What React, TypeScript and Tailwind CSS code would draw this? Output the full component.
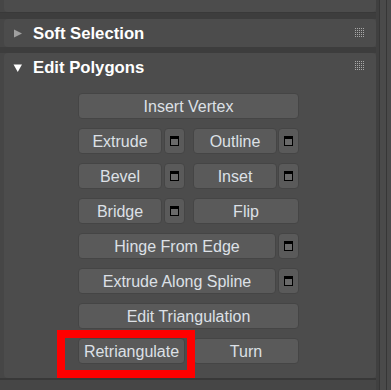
import React from "react";

const font = { fontFamily: '"Liberation Sans", Arial, sans-serif' };

function Grip() {
  const dots = [];
  for (let r = 0; r < 5; r++)
    for (let c = 0; c < 5; c++)
      dots.push(<rect key={`${r}-${c}`} x={c * 2} y={r * 2} width={1} height={1} fill="#a8a8a8" />);
  return (
    <svg width="10" height="10" viewBox="0 0 10 10" className="block">
      {dots}
    </svg>
  );
}

function Btn({ label, w }: { label: string; w: string }) {
  return (
    <div
      className={`${w} h-[26px] rounded-[4px] bg-[#5a5a5a] border border-[#454545] flex items-center justify-center text-[16px] text-[#dde0e6] leading-none pt-[2px]`}
    >
      {label}
    </div>
  );
}

function Opt() {
  return (
    <div className="w-[21px] h-[26px] rounded-[4px] bg-[#5a5a5a] border border-[#454545] flex items-center justify-center">
      <div className="w-[9px] h-[10px] border border-black border-t-[3px] bg-[#6a6a6a]" />
    </div>
  );
}

export default function App() {
  return (
    <div className="relative w-[391px] h-[390px] overflow-hidden bg-[#3d3d3d] flex" style={font}>
      <div className="w-[376px] flex flex-col">
        {/* top panel remnant */}
        <div className="h-[13px] bg-[#464646] pl-[4px] border-b border-[#393939]">
          <div className="h-full rounded-b-[4px] bg-[#4c4c4c]" />
        </div>
        <div className="h-[6px]" />
        {/* Soft Selection */}
        <div className="h-[28px] bg-[#464646] pl-[4px]">
          <div className="h-full rounded-[4px] bg-[#4c4c4c] flex items-center relative">
            <svg width="9" height="10" viewBox="0 0 9 10" className="ml-[10px] block mt-[1px]">
              <polygon points="0,0.5 8,4.5 0,8.5" fill="#a0a0a0" />
            </svg>
            <span className="ml-[10px] mt-[3px] text-[16.7px] font-bold text-white leading-none">Soft Selection</span>
            <div className="absolute left-[351px] top-[9px]">
              <Grip />
            </div>
          </div>
        </div>
        <div className="h-[6px]" />
        {/* Edit Polygons */}
        <div className="h-[325px] bg-[#464646] pl-[4px]">
          <div className="h-full rounded-[4px] bg-[#4c4c4c] flex flex-col relative">
            <div className="h-[28px] flex items-center">
              <svg width="10" height="9" viewBox="0 0 10 9" className="ml-[9px] block mt-[2px]">
                <polygon points="0.5,0.5 9,0.5 4.75,8" fill="#ffffff" />
              </svg>
              <span className="ml-[10px] mt-[3px] text-[16.7px] font-bold text-white leading-none">Edit Polygons</span>
              <div className="absolute left-[351px] top-[8px]">
                <Grip />
              </div>
            </div>
            <div className="ml-[74px] mt-[12px] w-[221px] flex flex-col gap-[9px]">
              <div className="flex">
                <Btn label="Insert Vertex" w="w-[221px]" />
              </div>
              <div className="flex">
                <Btn label="Extrude" w="w-[84px]" />
                <div className="w-[2px]" />
                <Opt />
                <div className="w-[8px]" />
                <Btn label="Outline" w="w-[84px]" />
                <div className="w-[1px]" />
                <Opt />
              </div>
              <div className="flex">
                <Btn label="Bevel" w="w-[84px]" />
                <div className="w-[2px]" />
                <Opt />
                <div className="w-[8px]" />
                <Btn label="Inset" w="w-[84px]" />
                <div className="w-[1px]" />
                <Opt />
              </div>
              <div className="flex">
                <Btn label="Bridge" w="w-[84px]" />
                <div className="w-[2px]" />
                <Opt />
                <div className="w-[8px]" />
                <Btn label="Flip" w="w-[106px]" />
              </div>
              <div className="flex">
                <Btn label="Hinge From Edge" w="w-[198px]" />
                <div className="w-[2px]" />
                <Opt />
              </div>
              <div className="flex">
                <Btn label="Extrude Along Spline" w="w-[198px]" />
                <div className="w-[2px]" />
                <Opt />
              </div>
              <div className="flex">
                <Btn label="Edit Triangulation" w="w-[221px]" />
              </div>
              <div className="flex">
                <Btn label="Retriangulate" w="w-[107px]" />
                <div className="w-[8px]" />
                <Btn label="Turn" w="w-[106px]" />
              </div>
            </div>
          </div>
        </div>
        <div className="h-[2px] bg-[#383838]" />
        <div className="flex-1 bg-[#464646]" />
      </div>
      {/* scrollbar */}
      <div className="flex-1 flex">
        <div className="w-[3px] bg-[#404040]" />
        <div className="w-[1px] bg-[#363636]" />
        <div className="w-[6px] bg-[#4a4a4a]" />
        <div className="w-[1px] bg-[#363636]" />
        <div className="flex-1 bg-[#4a4a4a]" />
      </div>
      {/* highlight box */}
      <div className="absolute left-[57px] top-[330px] w-[138px] h-[48px] border-[8px] border-[#ff0000]" />
    </div>
  );
}
